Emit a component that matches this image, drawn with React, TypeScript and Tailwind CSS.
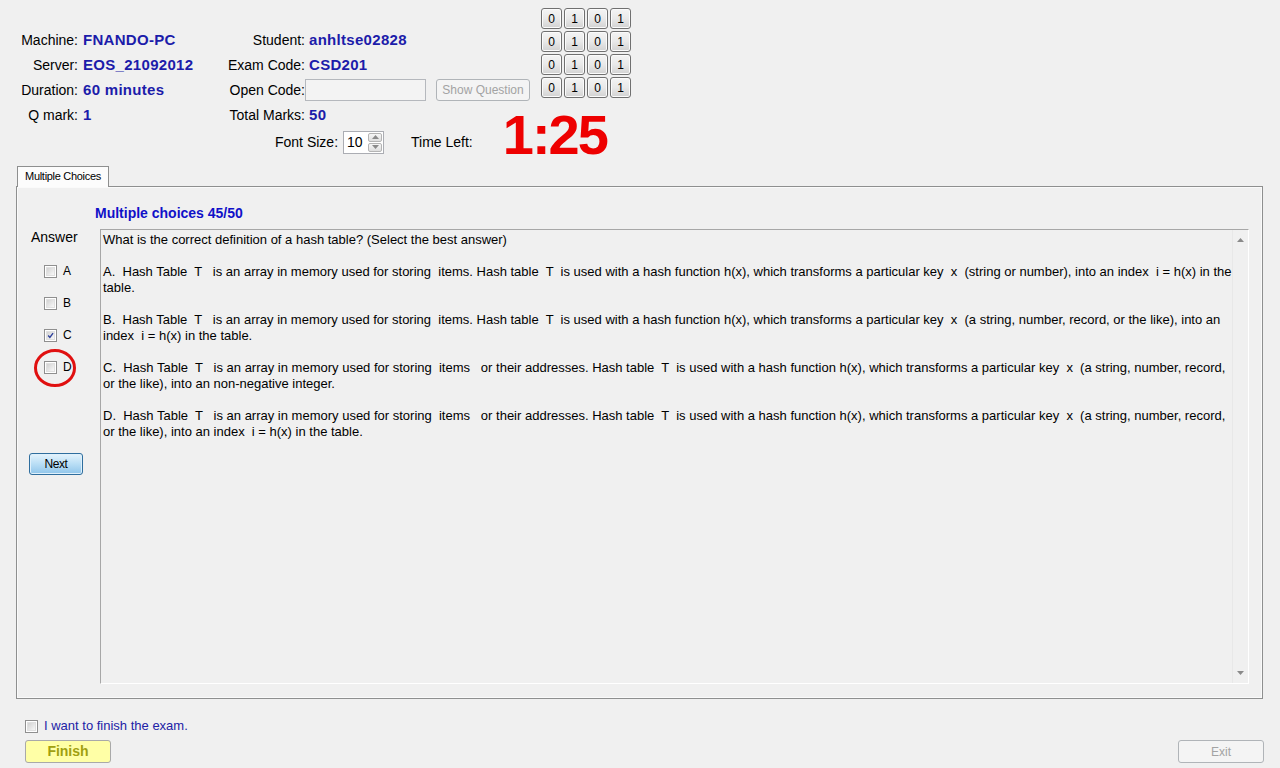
import React from "react";

const FONT = "font-['Liberation_Sans',Arial,sans-serif]";

function Check({ checked = false }: { checked?: boolean }) {
  return (
    <div className="w-[13px] h-[13px] border border-[#8f8f8f] bg-white p-[1px] flex-none">
      <div className="w-full h-full bg-linear-to-br from-[#d2d2d2] to-[#f8f8f8] border border-[#e0e0e0] relative">
        {checked && (
          <svg viewBox="0 0 9 9" className="absolute inset-0 w-full h-full">
            <path d="M1.5 4.5 L3.7 7 L7.8 1.3" fill="none" stroke="#2c3f9a" strokeWidth="1.7" />
          </svg>
        )}
      </div>
    </div>
  );
}

function Bit({ v }: { v: string }) {
  return (
    <div className="w-[21px] h-[21px] rounded-[3px] border border-[#707070] bg-linear-to-b from-[#f4f4f4] via-[#e9e9e9] to-[#d2d2d2] shadow-[inset_0_0_0_1px_#fbfbfb] flex items-center justify-center text-[12px] text-black leading-none">
      {v}
    </div>
  );
}

function Arrow({ up }: { up?: boolean }) {
  return (
    <svg width="7" height="4" viewBox="0 0 7 4">
      {up ? <path d="M0 4 L3.5 0 L7 4 Z" fill="#8a8a8a" /> : <path d="M0 0 L3.5 4 L7 0 Z" fill="#8a8a8a" />}
    </svg>
  );
}

const lines: string[] = [
  "What is the correct definition of a hash table? (Select the best answer)",
  "",
  "A.  Hash Table  T   is an array in memory used for storing  items. Hash table  T  is used with a hash function h(x), which transforms a particular key  x  (string or number), into an index  i = h(x) in the",
  "table.",
  "",
  "B.  Hash Table  T   is an array in memory used for storing  items. Hash table  T  is used with a hash function h(x), which transforms a particular key  x  (a string, number, record, or the like), into an",
  "index  i = h(x) in the table.",
  "",
  "C.  Hash Table  T   is an array in memory used for storing  items   or their addresses. Hash table  T  is used with a hash function h(x), which transforms a particular key  x  (a string, number, record,",
  "or the like), into an non-negative integer.",
  "",
  "D.  Hash Table  T   is an array in memory used for storing  items   or their addresses. Hash table  T  is used with a hash function h(x), which transforms a particular key  x  (a string, number, record,",
  "or the like), into an index  i = h(x) in the table.",
];

export default function App() {
  const label = "text-[14px] text-black text-right";
  const value = "text-[15px] font-bold tracking-[0.3px] text-[#1c1caa]";
  return (
    <div className={`${FONT} relative w-[1280px] h-[768px] bg-[#f0f0f0] overflow-hidden px-[16px]`}>
      {/* Header */}
      <div className="flex -mx-[16px]">
        <div className="grid grid-cols-[78px_142px_85px_225px] auto-rows-[25px] items-center pt-[28px]">
          <div className={label}>Machine:</div>
          <div className={`${value} pl-[5px]`}>FNANDO-PC</div>
          <div className={label}>Student:</div>
          <div className={`${value} pl-[4px]`}>anhltse02828</div>

          <div className={label}>Server:</div>
          <div className={`${value} pl-[5px]`}>EOS_21092012</div>
          <div className={label}>Exam Code:</div>
          <div className={`${value} pl-[4px]`}>CSD201</div>

          <div className={label}>Duration:</div>
          <div className={`${value} pl-[5px]`}>60 minutes</div>
          <div className={label}>Open Code:</div>
          <div className="flex items-center -mt-[1px]">
            <div className="w-[121px] h-[22px] border border-[#b5b8bd] bg-[#f3f3f3]" />
            <div className="ml-[10px] w-[94px] h-[22px] rounded-[3px] border border-[#b0b4b8] bg-[#f4f4f4] flex items-center justify-center text-[12px] text-[#a3a3a3]">
              Show Question
            </div>
          </div>

          <div className={label}>Q mark:</div>
          <div className={`${value} pl-[5px]`}>1</div>
          <div className={label}>Total Marks:</div>
          <div className={`${value} pl-[4px]`}>50</div>
        </div>
        <div className="ml-[11px] pt-[8px] grid grid-cols-[21px_21px_21px_21px] gap-[2px] h-fit">
          {[0, 1, 2, 3].map((r) => (
            <React.Fragment key={r}>
              <Bit v="0" />
              <Bit v="1" />
              <Bit v="0" />
              <Bit v="1" />
            </React.Fragment>
          ))}
        </div>
      </div>

      {/* Font size / time row */}
      <div className="flex items-center h-[28px] -mx-[16px] pl-[275px]">
        <div className="text-[14px] text-black">Font Size:</div>
        <div className="ml-[5px] w-[41px] h-[23px] border border-[#abadb3] bg-white flex">
          <div className="flex-1 text-[14px] leading-[21px] pl-[3px] text-black">10</div>
          <div className="w-[15px] flex flex-col gap-[1px] py-[1px] pr-[1px]">
            <div className="flex-1 rounded-[2px] border border-[#b4b4b4] bg-linear-to-b from-[#f6f6f6] to-[#dedede] flex items-center justify-center">
              <Arrow up />
            </div>
            <div className="flex-1 rounded-[2px] border border-[#b4b4b4] bg-linear-to-b from-[#f6f6f6] to-[#dedede] flex items-center justify-center">
              <Arrow />
            </div>
          </div>
        </div>
        <div className="ml-[27px] text-[14px] text-black">Time Left:</div>
        <div className="ml-[30px] self-start h-[28px] leading-[14px] text-[56px] font-bold tracking-[-2px] text-[#ee0000]">
          1:25
        </div>
      </div>

      {/* Tab */}
      <div className="mt-[10px] flex">
        <div className="ml-[1px] w-[92px] h-[21px] border border-b-0 border-[#8e8f8f] bg-[#fcfcfc] text-[11px] tracking-[-0.3px] text-black flex items-center justify-center relative z-10 -mb-px pb-[1px]">
          Multiple Choices
        </div>
      </div>
      <div className="w-[1247px] h-[513px] border border-[#8e8f8f] shadow-[inset_0_0_0_1px_#fafafa] bg-[#f0f0f0] flex flex-col">
        <div className="pl-[78px] pt-[18px] h-[34px] text-[14px] font-bold leading-[16px] text-[#1010c8]">
          Multiple choices 45/50
        </div>
        <div className="flex mt-[8px]">
          <div className="w-[83px] flex flex-col">
            <div className="pl-[14px] text-[14px] leading-[16px] text-black">Answer</div>
            <div className="mt-[10px] flex flex-col">
              {["A", "B", "C", "D"].map((l) => (
                <div key={l} className="h-[32px] flex items-center pl-[27px]">
                  <Check checked={l === "C"} />
                  <span className="ml-[6px] text-[12px] text-black">{l}</span>
                </div>
              ))}
            </div>
            <div className="mt-[70px] ml-[12px] w-[54px] h-[22px] rounded-[3px] border border-[#2f6e9e] bg-linear-to-b from-[#e4f3fc] via-[#b9def5] to-[#8fc5ea] shadow-[inset_0_0_0_1px_#dff0fb] flex items-center justify-center text-[12px] tracking-[-0.4px] text-black">
              Next
            </div>
          </div>
          <div className="w-[1149px] h-[455px] border-t border-l border-[#a7a7a7] border-b border-b-white border-r border-r-white flex">
            <div className="flex-1 pl-[2px] pt-[2px] text-[13px] leading-[16px] text-black whitespace-pre">
              {lines.map((t, i) => (
                <div key={i} className="h-[16px]">{t}</div>
              ))}
            </div>
            <div className="w-[16px] border-l border-[#e8e8e8] flex flex-col items-center justify-between py-[8px]">
              <Arrow up />
              <Arrow />
            </div>
          </div>
        </div>
      </div>

      {/* Bottom */}
      <div className="mt-[19px] ml-[9px] flex items-center h-[16px]">
        <Check />
        <span className="ml-[6px] text-[13px] text-[#2222a6]">I want to finish the exam.</span>
      </div>
      <div className="mt-[6px] flex justify-between">
        <div className="ml-[9px] w-[86px] h-[23px] rounded-[3px] border border-[#a9a9a9] bg-[#ffffa6] flex items-center justify-center text-[14px] font-bold text-[#a0a010]">
          Finish
        </div>
        <div className="w-[86px] h-[23px] rounded-[3px] border border-[#b0b4b8] bg-[#f4f4f4] flex items-center justify-center text-[12px] text-[#a3a3a3]">
          Exit
        </div>
      </div>

      {/* Red annotation circle */}
      <svg className="absolute left-[33px] top-[348px]" width="44" height="40" viewBox="0 0 44 40">
        <ellipse cx="22" cy="20" rx="19.5" ry="17.5" fill="none" stroke="#e01010" strokeWidth="3" />
      </svg>
    </div>
  );
}
